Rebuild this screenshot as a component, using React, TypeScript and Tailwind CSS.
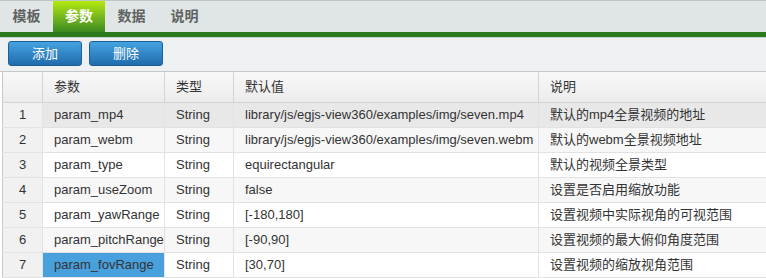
import React from "react";

const rows = [
  ["param_mp4", "String", "library/js/egjs-view360/examples/img/seven.mp4", "默认的mp4全景视频的地址"],
  ["param_webm", "String", "library/js/egjs-view360/examples/img/seven.webm", "默认的webm全景视频地址"],
  ["param_type", "String", "equirectangular", "默认的视频全景类型"],
  ["param_useZoom", "String", "false", "设置是否启用缩放功能"],
  ["param_yawRange", "String", "[-180,180]", "设置视频中实际视角的可视范围"],
  ["param_pitchRange", "String", "[-90,90]", "设置视频的最大俯仰角度范围"],
  ["param_fovRange", "String", "[30,70]", "设置视频的缩放视角范围"],
];

const tabs = ["模板", "参数", "数据", "说明"];

const App = () => {
  return (
    <div
      className="w-[766px] h-[278px] overflow-hidden bg-white text-[13px] text-[#333]"
      style={{ fontFamily: '"Liberation Sans", "Noto Sans CJK SC", sans-serif' }}
    >
      {/* Tabs */}
      <div className="flex h-[32px] border-t border-[#bfc5c5] bg-[#e0e6e5]">
        {tabs.map((t, i) =>
          i === 1 ? (
            <div
              key={t}
              className="flex w-[52px] items-center justify-center bg-gradient-to-b from-[#b4ea0c] to-[#3a8a20] text-[14px] font-bold text-white"
            >
              {t}
            </div>
          ) : (
            <div key={t} className="flex w-[53px] items-center justify-center text-[14px] font-bold text-[#5f6363]">
              {t}
            </div>
          )
        )}
      </div>
      <div className="h-[5px] bg-[#2b7a1e]" />

      {/* Toolbar */}
      <div className="flex h-[35px] items-start gap-[7px] border-t border-b border-t-[#c9d3cf] border-b-[#c4c8c8] bg-[#edf1f1] pl-[8px] pt-[3px]">
        <button className="h-[25px] w-[74px] rounded-[3px] border border-[#1d5f92] bg-gradient-to-b from-[#45a3e0] to-[#1f6cae] text-[13px] text-white">
          添加
        </button>
        <button className="h-[25px] w-[74px] rounded-[3px] border border-[#1d5f92] bg-gradient-to-b from-[#45a3e0] to-[#1f6cae] text-[13px] text-white">
          删除
        </button>
      </div>

      {/* Table */}
      <div className="pl-[2px]">
        <table className="w-[764px] table-fixed border-collapse border-l border-[#c8c8c8]">
          <colgroup>
            <col className="w-[40px]" />
            <col className="w-[122px]" />
            <col className="w-[69px]" />
            <col className="w-[305px]" />
            <col className="w-[228px]" />
          </colgroup>
          <thead>
            <tr className="h-[30px] bg-gradient-to-b from-[#f8f8f8] to-[#ececec]">
              <th className="border-r border-b border-[#d4d4d4]" />
              <th className="border-r border-b border-[#d4d4d4] pl-[11px] text-left font-normal">参数</th>
              <th className="border-r border-b border-[#d4d4d4] pl-[11px] text-left font-normal">类型</th>
              <th className="border-r border-b border-[#d4d4d4] pl-[11px] text-left font-normal">默认值</th>
              <th className="border-b border-[#d4d4d4] pl-[11px] text-left font-normal">说明</th>
            </tr>
          </thead>
          <tbody>
            {rows.map((r, i) => {
              const bg = i === 0 ? "bg-[#e8e8e8]" : i % 2 === 1 ? "bg-[#f7f7f7]" : "bg-white";
              return (
                <tr key={r[0]} className={`h-[25px] ${bg}`}>
                  <td className="border-r border-b border-[#e2e2e2] bg-[#f1f1f1] text-center">{i + 1}</td>
                  <td
                    className={`border-r border-b border-[#e2e2e2] pl-[11px] whitespace-nowrap ${
                      i === 6 ? "bg-[#48a0dc]" : ""
                    }`}
                  >
                    {r[0]}
                  </td>
                  <td className="border-r border-b border-[#e2e2e2] pl-[11px]">{r[1]}</td>
                  <td className="border-r border-b border-[#e2e2e2] pl-[11px] whitespace-nowrap">{r[2]}</td>
                  <td className="border-b border-[#e2e2e2] pl-[11px] whitespace-nowrap">{r[3]}</td>
                </tr>
              );
            })}
          </tbody>
        </table>
      </div>
    </div>
  );
};

export default App;
